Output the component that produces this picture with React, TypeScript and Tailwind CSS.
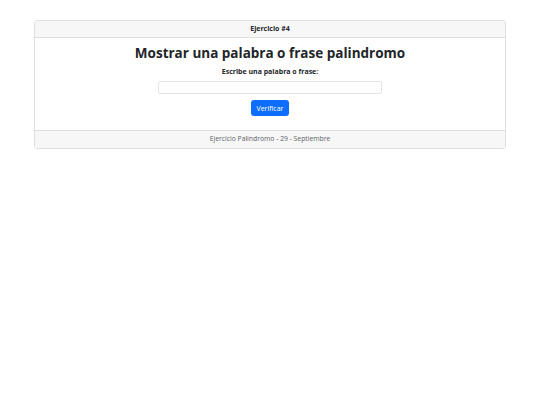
export default function App() {
  return (
    <div className="min-h-screen bg-white px-[34px] pt-[20px] font-['Open_Sans',sans-serif] text-[#212529]">
      {/* Card */}
      <div className="rounded-[3px] border border-[#dfdfdf] overflow-hidden">
        <div className="h-[17px] bg-[#f7f7f7] border-b border-[#dfdfdf] flex items-center justify-center text-[7px] font-bold">
          Ejercicio #4
        </div>

        <div className="flex flex-col items-center pt-[7px] pb-[14px]">
          <h1 className="text-[13.5px] font-bold leading-[16px]">
            Mostrar una palabra o frase palindromo
          </h1>
          <label className="mt-[6px] text-[7px] font-bold leading-[10px]">
            Escribe una palabra o frase:
          </label>
          <input
            type="text"
            className="mt-[4px] w-[224px] h-[13px] rounded-[2px] border border-[#e3e3e3] outline-none"
          />
          <button className="mt-[6px] h-[16px] px-[6px] rounded-[3px] bg-[#0d6efd] text-white text-[7px] leading-none">
            Verificar
          </button>
        </div>

        <div className="h-[18px] bg-[#f7f7f7] border-t border-[#dfdfdf] flex items-center justify-center text-[6.8px] text-[#5c636a]">
          Ejercicio Palindromo - 29 - Septiembre
        </div>
      </div>
    </div>
  );
}
